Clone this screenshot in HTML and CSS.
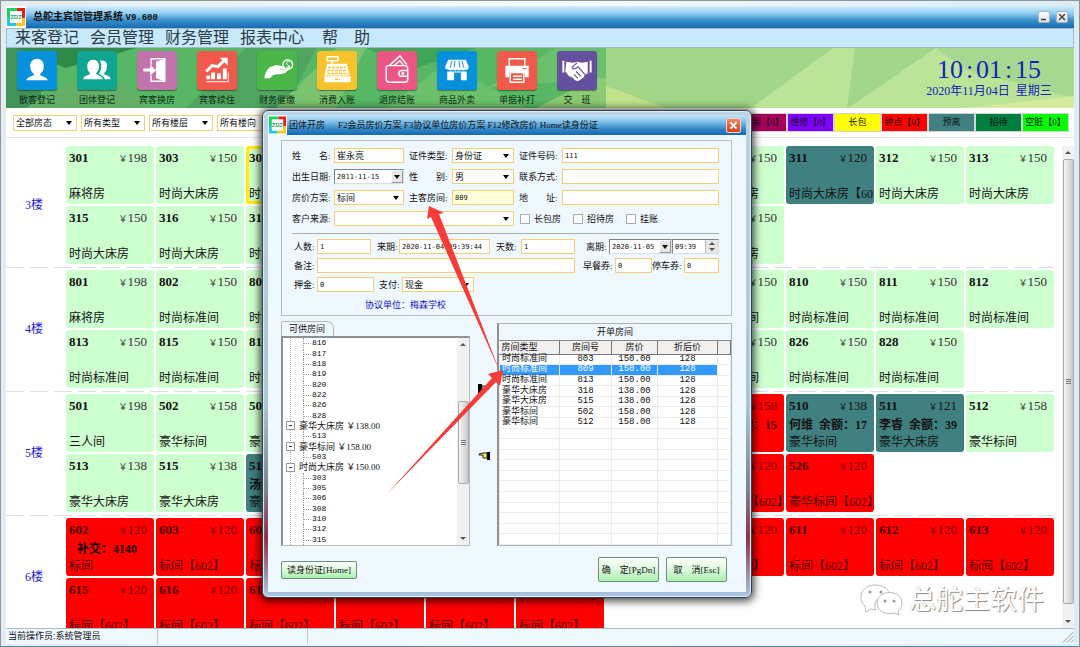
FILE: index.html
```html
<!DOCTYPE html>
<html lang="zh-CN">
<head>
<meta charset="utf-8">
<title>总舵主宾馆管理系统</title>
<link rel="stylesheet" href="styles.css">
</head>
<body>
<div class="window">
  <header class="titlebar">
    <svg class="logo" viewBox="0 0 20 20"><path fill="#18d45c" d="M1 1h10v4H5v6H1z"/><path fill="#f01818" d="M11 1h8v10h-4V5h-4z"/><path fill="#ffc61a" d="M19 11v8h-9v-4h5v-4z"/><path fill="#22c8f4" d="M1 11h4v4h5v4H1z"/><path fill="#fff" d="M4 4h12v12H4z"/><text x="10" y="12" class="logo-text">ZDZ</text></svg>
    <h1 class="app-name">总舵主宾馆管理系统 <span class="version">V9.600</span></h1>
    <div class="win-buttons">
      <button class="win-btn" aria-label="最小化"><svg viewBox="0 0 10 10"><path d="M2 7.500h5" stroke="#444" stroke-width="1.500"/></svg></button>
      <button class="win-btn" aria-label="关闭"><svg viewBox="0 0 10 10"><path d="M2 2l6 6M8 2l-6 6" stroke="#444" stroke-width="1.500"/></svg></button>
    </div>
  </header>
  <nav class="menubar">
    <a href="#">来客登记</a><a href="#">会员管理</a><a href="#">财务管理</a><a href="#">报表中心</a><a href="#" class="help">帮&emsp;助</a>
  </nav>
  <section class="toolbar">
    <svg class="toolbar-bg" viewBox="0 0 1068 60" preserveAspectRatio="none">
      <path fill="#a2d688" d="M0 0h1068v60H0z"/>
      <path fill="#bce498" d="M745 60L827 0h22l-8 60zM842 60L930 0h138v60z"/><path fill="#a7d890" d="M930 0h138v50L960 22z"/><path fill="#d5eb9c" d="M960 60l108-12v12z"/>
      <path fill="#57b765" d="M0 0h600v60H0z"/>
      <path fill="#42925a" d="M0 0h35v60H0z"/><path fill="#2f8a4a" d="M10 0h120L60 20z"/><path fill="#64ae67" d="M35 50l60-30 50 40H20z"/><path fill="#4fa45f" d="M180 60l60-60h70l-30 60z"/><path fill="#7bc36f" d="M270 60L330 0h30l-30 60z"/><path fill="#3fa557" d="M360 0h110l-60 20z"/><path fill="#6ac06b" d="M380 60l60-45 80 45zM480 40l70-40h50v30z"/><path fill="#8acb73" d="M530 60l60-30h10v30z"/><path fill="#c0e38c" d="M600 38l60 22h-60z"/>
    </svg>
    <button class="tool"><svg class="tile blue" viewBox="0 0 40 40"><path fill="#fff" d="M20 8c5 0 7 4 7 8 0 4-2 6-4 8 1 2 7 2 8 6H9c1-4 7-4 8-6-2-2-4-4-4-8 0-4 2-8 7-8z"/></svg>散客登记</button>
    <button class="tool"><svg class="tile teal" viewBox="0 0 40 40"><path fill="#fff" d="M16 9c5 0 6 4 6 7s-1 5-3 7c1 2 6 2 7 6H6c0-4 6-4 7-6-2-2-3-4-3-7s1-7 6-7z"/><path fill="#fff" d="M23 10c6-1 8 3 7 7 0 3-1 4-3 6 1 2 7 2 7 6h-6c-1-4-4-4-6-6 3-4 3-9 1-13z"/></svg>团体登记</button>
    <button class="tool"><svg class="tile purple" viewBox="0 0 40 40"><path fill="none" stroke="#fff" stroke-width="1.500" d="M14 14V8h14v23H14v-6"/><path fill="#fff" d="M19 11l9-3v23l-9-3zM6 18h7v-4l6 6-6 5v-4H6z"/></svg>宾客换房</button>
    <button class="tool"><svg class="tile coral" viewBox="0 0 40 40"><path fill="#fff" d="M9 25h4v4H9zM14 22h4v7h-4zM20 23h4v6h-4zM26 18h4v11h-4zM9 31h22v-9h1v10H9z"/><path fill="none" stroke="#fff" stroke-width="3" d="M9 21l6-6 6 1 7-7"/><path fill="#fff" d="M23 7h8v8z"/></svg>宾客续住</button>
    <button class="tool"><svg class="tile green" viewBox="0 0 40 40"><path fill="#fff" d="M7 28c1-7 3-11 10-13 4-1 9 1 11 2 1 2-2 2-7 2 4 1 9 0 12-4 2 1-1 4-4 7-5 4-12-1-16 6z"/><circle cx="31" cy="14" r="5" fill="none" stroke="#fff" stroke-width="1.500"/><path stroke="#fff" fill="none" d="M33 11c-4-1-4 2-2 3s1 4-2 2"/></svg>财务催缴</button>
    <button class="tool"><svg class="tile yellow" viewBox="0 0 40 40"><path fill="none" stroke="#fff" stroke-width="1.500" d="M10 6h11v4H10zM15 10v4"/><path fill="#fff" d="M10 13h20l3 12H7zM7 26h27v6H7z"/><path fill="none" stroke="#f7c22c" stroke-width="1.500" stroke-dasharray="3 1" d="M11 17h18M10 20h20M10 23h21M18 29h5"/></svg>消费入账</button>
    <button class="tool"><svg class="tile pink" viewBox="0 0 40 40"><path fill="none" stroke="#fff" stroke-width="1.500" d="M11 15h17q3 0 3 3v11q0 3-3 3H12q-3 0-3-3V17q0-2 2-2M31 20h-6q-3 0-3 3t3 3h6M12 15l11-10 7 9M17 15l6-5 4 5"/><circle cx="26" cy="23" r="1.500" fill="#fff"/></svg>退房结账</button>
    <button class="tool"><svg class="tile blue" viewBox="0 0 40 40"><path fill="#fff" d="M11 9h18l3 7q0 4-3 3-3 2-5 0-2 2-4 0-2 2-4 0-2 2-5 0-4 0-3-3zM10 21h20v9h-6v-8h-7v8h-7z"/><path stroke="#0791dd" fill="none" d="M15 10l-2 7M18 10l-1 7M22 10l1 7M25 10l2 7"/></svg>商品外卖</button>
    <button class="tool"><svg class="tile coral" viewBox="0 0 40 40"><path fill="none" stroke="#fff" stroke-width="1.500" d="M12 15V8h16v7"/><path fill="#fff" d="M8 15h24v12h-4v-5H12v5H8z"/><path fill="none" stroke="#fff" stroke-width="1.500" d="M13 22h14v10H13zM16 26h9M16 29h9"/><path stroke="#f1594b" d="M26 18h4"/></svg>单据补打</button>
    <button class="tool"><svg class="tile violet" viewBox="0 0 40 40"><path fill="#fff" d="M5 10h2v12H5zM33 10h2v12h-2zM9 11l7 1 4-1 5 1 6-1v12l-3 1-1 3-3 2-3 2-3-1-3-3-3-1-4-5z"/><path fill="none" stroke="#65509f" stroke-width="1.200" d="M20 12l-5 5q2 3 6-1l7 8M19 21l5 5M17 24l4 4"/></svg>交&emsp;班</button>
    <div class="clock">
      <div class="time">10<span class="colon">:</span>01<span class="colon">:</span>15</div>
      <div class="date">2020年11月04日&nbsp; 星期三</div>
    </div>
  </section>
  <section class="filters">
    <select class="field select" aria-label="房态"><option>全部房态</option></select>
    <select class="field select" aria-label="类型"><option>所有类型</option></select>
    <select class="field select" aria-label="楼层"><option>所有楼层</option></select>
    <select class="field select" aria-label="楼向"><option>所有楼向</option></select>
    <div class="legend">
      <span class="tag reserved">预留【0】</span><span class="tag repair">维修【0】</span><span class="tag long">长包</span><span class="tag hourly">钟点【0】</span><span class="tag leaving">预离</span><span class="tag guest">招待</span><span class="tag dirty">空脏【0】</span>
    </div>
  </section>
  <main class="board">
    <div class="floors" id="floors"></div>
    <div class="scrollbar tall"><i class="up"></i><b class="thumb"></b><i class="down"></i></div>
  </main>
  <footer class="statusbar"><span class="operator">当前操作员:系统管理员</span><span class="cell"></span><svg class="grip" viewBox="0 0 12 12"><path d="M1 12L12 1M5 12l7-7M9 12l3-3" stroke="#999"/></svg></footer>
</div>

<div class="watermark">
  <svg viewBox="0 0 44 34"><path fill="#fff" stroke="#bbb" d="M5 23C-3 16 1 2 15 2c9 0 14 5 15 10-11-1-18 8-14 15l-5-1-5 3z"/><path fill="#fff" stroke="#bbb" d="M17 20c0-14 25-14 25 0 0 4-2 7-4 8l1 4-5-2c-8 2-17-1-17-10z"/><g fill="#999"><circle cx="10" cy="9" r="1.500"/><circle cx="21" cy="9" r="1.500"/><circle cx="25" cy="18" r="1.500"/><circle cx="34" cy="18" r="1.500"/></g></svg>
  <span>总舵主软件</span>
</div>

<div class="dialog" role="dialog" aria-label="团体开房">
  <div class="dialog-inner">
    <header class="dialog-title">
      <svg class="logo small" viewBox="0 0 20 20"><path fill="#18d45c" d="M1 1h10v4H5v6H1z"/><path fill="#f01818" d="M11 1h8v10h-4V5h-4z"/><path fill="#ffc61a" d="M19 11v8h-9v-4h5v-4z"/><path fill="#22c8f4" d="M1 11h4v4h5v4H1z"/><path fill="#fff" d="M4 4h12v12H4z"/><text x="10" y="12" class="logo-text">ZDZ</text></svg>
      <span class="dialog-name">团体开房</span><span>F2会员房价方案 F3协议单位房价方案 F12修改房价 Home读身份证</span>
      <button class="close" aria-label="关闭"><svg viewBox="0 0 15 15"><path d="M4 4l7 7M11 4l-7 7" stroke="#fff" stroke-width="2"/></svg></button>
    </header>
    <form class="dialog-body">
      <fieldset class="group">
        <div class="guest-grid">
          <label for="name">姓&emsp;&emsp;名:</label><input class="field cn" id="name" value="崔永亮">
          <label for="idtype">证件类型:</label><select class="field select" id="idtype"><option>身份证</option></select>
          <label for="idno">证件号码:</label><input class="field" id="idno" value="111">
          <label for="birth">出生日期:</label><div class="sunken"><input id="birth" value="2011-11-15"><button type="button" class="drop" aria-label="选择日期"></button></div>
          <label for="sex">性&emsp;&emsp;别:</label><select class="field select" id="sex"><option>男</option></select>
          <label for="tel">联系方式:</label><input class="field" id="tel">
          <label for="plan">房价方案:</label><select class="field select" id="plan"><option>标间</option></select>
          <label for="mainroom">主客房间:</label><input class="field main-room" id="mainroom" value="809">
          <label for="addr">地&emsp;&emsp;址:</label><input class="field" id="addr">
          <label for="source">客户来源:</label><select class="field select source" id="source"><option></option></select>
          <div class="checks"><label><input type="checkbox">长包房</label><label><input type="checkbox">招待房</label><label><input type="checkbox">挂账</label></div>
        </div>
        <hr>
        <div class="stay-grid">
          <label for="count">人数:</label><input class="field" id="count" value="1">
          <label for="arrive" class="inset">来期:</label><input class="field" id="arrive" value="2020-11-04 09:39:44">
          <label for="days" class="inset">天数:</label><input class="field" id="days" value="1">
          <label for="leave" class="inset wide">离期:</label>
          <div class="leave"><div class="sunken"><input id="leave" value="2020-11-05"><button type="button" class="drop" aria-label="选择日期"></button></div><div class="sunken"><input aria-label="离店时间" value="09:39"><button type="button" class="spin" aria-label="调整时间"><i class="up"></i><i class="down"></i></button></div></div>
          <label for="memo">备注:</label><input class="field memo" id="memo">
          <div class="coupons"><label for="breakfast">早餐券:</label><input class="field" id="breakfast" value="0"><label for="parking">停车券:</label><input class="field" id="parking" value="0"></div>
          <label for="deposit">押金:</label>
          <div class="pay"><input class="field" id="deposit" value="0"><label for="pay">支付:</label><select class="field select" id="pay"><option>现金</option></select></div>
        </div>
        <p class="unit">协议单位：梅森学校</p>
      </fieldset>
      <div class="lists">
        <section class="available">
          <h2 class="tab">可供房间</h2>
          <div class="tree-box">
            <ul class="tree">
              <li>816</li><li>817</li><li>818</li><li>819</li><li>820</li><li>822</li><li>826</li><li>828</li>
              <li class="type">豪华大床房 ￥138.00</li><li>513</li>
              <li class="type">豪华标间 ￥158.00</li><li>503</li>
              <li class="type">时尚大床房 ￥150.00</li><li>303</li><li>305</li><li>306</li><li>308</li><li>310</li><li>312</li><li>315</li>
            </ul>
            <div class="scrollbar short"><i class="up"></i><b class="thumb"></b><i class="down"></i></div>
          </div>
        </section>
        <div class="movers">
          <button type="button" aria-label="添加房间"><svg viewBox="0 0 12 9"><path d="M0 0h4v9H0z"/><path fill="#ffe95c" stroke="#222" d="M4 2h3l4 1v2H8v2H4z"/></svg></button>
          <button type="button" aria-label="移除房间"><svg viewBox="0 0 12 9"><path d="M9 1h3v8H9z"/><path fill="#ffe95c" stroke="#222" d="M9 2H5L1 3v1h4v3h4z"/></svg></button>
        </div>
        <section class="chosen">
          <h2>开单房间</h2>
          <table>
            <colgroup><col class="c1"><col class="c2"><col class="c3"><col class="c4"><col></colgroup>
            <thead><tr><th>房间类型</th><th>房间号</th><th>房价</th><th>折后价</th><th></th></tr></thead>
            <tbody>
              <tr><td>时尚标准间</td><td>803</td><td>150.00</td><td>128</td><td></td></tr>
              <tr class="picked"><td>时尚标准间</td><td>809</td><td>150.00</td><td>128</td><td></td></tr>
              <tr><td>时尚标准间</td><td>813</td><td>150.00</td><td>128</td><td></td></tr>
              <tr><td>豪华大床房</td><td>318</td><td>138.00</td><td>128</td><td></td></tr>
              <tr><td>豪华大床房</td><td>515</td><td>138.00</td><td>128</td><td></td></tr>
              <tr><td>豪华标间</td><td>502</td><td>158.00</td><td>128</td><td></td></tr>
              <tr><td>豪华标间</td><td>512</td><td>158.00</td><td>128</td><td></td></tr>
              <tr><td></td><td></td><td></td><td></td><td></td></tr><tr><td></td><td></td><td></td><td></td><td></td></tr><tr><td></td><td></td><td></td><td></td><td></td></tr><tr><td></td><td></td><td></td><td></td><td></td></tr><tr><td></td><td></td><td></td><td></td><td></td></tr><tr><td></td><td></td><td></td><td></td><td></td></tr><tr><td></td><td></td><td></td><td></td><td></td></tr><tr><td></td><td></td><td></td><td></td><td></td></tr><tr><td></td><td></td><td></td><td></td><td></td></tr><tr><td></td><td></td><td></td><td></td><td></td></tr><tr><td></td><td></td><td></td><td></td><td></td></tr>
            </tbody>
          </table>
        </section>
      </div>
      <div class="actions">
        <button type="button" class="btn read">读身份证[Home]</button>
        <button type="button" class="btn">确&emsp;定[PgDn]</button>
        <button type="button" class="btn">取&emsp;消[Esc]</button>
      </div>
    </form>
  </div>
  <svg class="arrows" viewBox="0 0 490 487"><g fill="#f73c38"><path d="M167 96l-2 13 4-2 69 155-61-158 5-1z"/><path d="M241 260l-15 4 4 4L124 385 234 272l4 4z"/></g></svg>
</div>
<script src="script.js"></script>
</body>
</html>
```
FILE: styles.css
```css
* { box-sizing: border-box; }
body {
  margin: 0;
  font-family: "Liberation Serif", "Noto Sans CJK SC", serif;
  font-size: 9px;
  line-height: 12px;
  color: #111;
  background: #dfe8ee;
}
button, input, select { font: inherit; color: inherit; margin: 0; padding: 0; border: 0; background: none; border-radius: 0; min-width: 0; }
h1, h2, p, ul { margin: 0; padding: 0; font-weight: 400; font-size: 9px; }
a { color: inherit; text-decoration: none; }
.window {
  height: 100vh;
  display: flex;
  flex-direction: column;
  padding: 5px 5px 2px;
  border: 1px solid #8c969d;
  border-bottom: 1px solid #5685ad;
  background: linear-gradient(90deg, #e4ecef, #f6f9fa 50%, #dcecf5);
}
.titlebar {
  flex: none;
  height: 22px;
  display: flex;
  align-items: center;
  background: linear-gradient(#d4effd, #8ccbf0 35%, #3a8fcb 65%, #146bb5);
}
.logo { width: 20px; height: 22px; background: #fff; }
.logo-text { font: bold 6px "Liberation Sans", sans-serif; text-anchor: middle; fill: #1ca06a; }
.app-name { margin-left: 7px; font-size: 10px; font-weight: 700; flex: 1; }
.version { font-family: "Liberation Mono", monospace; font-size: 9px; }
.win-buttons { display: flex; gap: 6px; padding-right: 6px; }
.win-btn { width: 12px; height: 12px; border: 1px solid #a7b4bd; border-radius: 2px; background: linear-gradient(#fff, #d9dfe3); display: flex; }
.menubar {
  flex: none;
  height: 20px;
  display: flex;
  align-items: center;
  gap: 11px;
  padding-left: 8px;
  background: #c8e8fc;
  border: 1px solid #a5b8c4;
  font-size: 16px;
  line-height: 18px;
  color: #2b3a46;
}
.help { margin-left: 7px; }
.toolbar { flex: none; height: 60px; display: flex; position: relative; padding-left: 1px; }
.toolbar-bg { position: absolute; inset: 0; width: 100%; height: 100%; }
.tool { position: relative; flex: none; width: 60px; display: flex; flex-direction: column; align-items: center; gap: 4px; padding-top: 3px; color: #0b2a10; }
.tile { width: 40px; height: 39px; border-radius: 3px; box-shadow: 0 1px 1px rgba(0, 0, 0, .4); }
.blue { background: #0791dd; }
.teal { background: #10a590; }
.purple { background: #c273ae; }
.coral { background: #f1594b; }
.green { background: #4bb648; }
.yellow { background: #f7c22c; }
.pink { background: #eb5684; }
.violet { background: #65509f; }
.clock { position: relative; margin-left: auto; width: 170px; display: flex; flex-direction: column; align-items: center; padding-top: 9px; color: #1423b8; }
.time { font-size: 26px; line-height: 26px; }
.colon { display: inline-block; width: 13px; text-align: center; }
.date { font-size: 12px; line-height: 17px; }
.filters { flex: none; height: 30px; display: flex; align-items: center; gap: 4px; padding: 0 5px 0 7px; background: #fff; border-bottom: 1px solid #dce8f2; }
.filters .field { width: 64px; height: 16px; }
.field { height: 15px; border: 1px solid #f2cf78; background-color: #fff; padding: 0 2px; font-family: "DejaVu Sans Mono", "Noto Sans CJK SC", monospace; font-size: 7px; line-height: 12px; width: 100%; }
.select {
  appearance: none;
  font-size: 9px;
  background-image: url("data:image/svg+xml,%3Csvg xmlns='http://www.w3.org/2000/svg' viewBox='0 0 6 4'%3E%3Cpath d='M0 0h6L3 4z'/%3E%3C/svg%3E");
  background-repeat: no-repeat;
  background-position: right 4px center;
  background-size: 6px 4px;
}
.cn { font-size: 9px; }
.legend { margin-left: auto; display: flex; }
.tag { width: 47px; height: 19px; border: 1px solid #d4d4d4; line-height: 17px; text-align: center; white-space: nowrap; overflow: hidden; }
.reserved { background: #a8005c; }
.repair { background: #8000ff; }
.long { background: #ffff00; }
.hourly { background: #ff0000; }
.leaving { background: #408080; }
.guest { background: #008040; }
.dirty { background: #00ff00; }
.board { flex: 1; min-height: 0; display: flex; background: #fff; padding-top: 8px; }
.floors { flex: 1; min-width: 0; overflow: hidden; padding-right: 8px; }
.floor {
  display: grid;
  grid-template-columns: 60px 1fr;
  align-items: center;
  padding-bottom: 6px;
  background: repeating-linear-gradient(90deg, #d5e0e8 0 18px, transparent 18px 24px) left bottom 2px / 100% 1px no-repeat;
}
.floor-name { text-align: center; font-size: 12px; line-height: 16px; color: #1b1bd0; padding-right: 4px; }
.cards { display: grid; grid-template-columns: repeat(11, minmax(0, 1fr)); gap: 2px; }
.row-start { grid-column-start: 1; }
.card { height: 58px; border-radius: 3px; background: #ceffce; overflow: hidden; display: grid; grid-template: 20px 18px 16px / auto 1fr; align-items: center; padding: 2px 7px 2px 3px; font-size: 12px; line-height: 16px; white-space: nowrap; }
.card b, .card .price { font-size: 13px; }
.card .price { text-align: right; color: #333; }
.card .yen { font-size: 9px; }
.card .note { grid-column: 1 / 3; font-weight: 700; }
.card .kind { grid-column: 1 / 3; grid-row: 3; }
.card.red { background: #ff0000; color: #4a0000; }
.card.red .price { color: #700; }
.card.dark { background: #408080; }
.card.dark .price { color: #111; }
.card.current { box-shadow: inset 0 0 0 3px #ffee00; }
.note.indent { padding-left: 8px; color: #1c0000; }
.scrollbar { flex: none; width: 12px; background: #f1f1f1; display: flex; flex-direction: column; align-items: center; }
.up, .down { border: 3px solid transparent; width: 0; height: 0; }
.up { border-bottom-color: #555; border-top: 0; }
.down { border-top-color: #555; border-bottom: 0; }
.scrollbar .up, .scrollbar .down { margin: 5px 0; }
.thumb { width: 11px; border: 1px solid #aaa; border-radius: 2px; background: repeating-linear-gradient(#777 0 1px, transparent 1px 2px) center / 5px 5px no-repeat, linear-gradient(90deg, #f5f5f5, #c9c9c9); }
.tall .thumb { flex: 1; margin-bottom: 11px; }
.short .thumb { margin: 50px 0 auto; height: 83px; }
.statusbar { flex: none; height: 16px; display: flex; border-top: 1px solid #a9bac8; background: #eff8fe; font-family: "Liberation Sans", "Noto Sans CJK SC", sans-serif; line-height: 15px; }
.operator { width: 152px; padding-left: 2px; border-right: 1px solid #bccad4; }
.cell { width: 150px; border-right: 1px solid #bccad4; }
.grip { width: 12px; margin-left: auto; }
.watermark { position: absolute; right: 36px; top: 582px; display: flex; align-items: center; gap: 5px; font-size: 27px; line-height: 36px; color: #fff; text-shadow: 1px 1px 1px #888, 0 0 1px #ccc; }
.watermark svg { width: 44px; height: 34px; }

.dialog {
  position: absolute;
  left: 262px;
  top: 110px;
  width: 490px;
  padding: 4px 5px 5px;
  border-radius: 6px;
  border: 1px solid #34424c;
  background: linear-gradient(#bdd3e4, #a9c6d6 60%, #7c7f8e 78%, #8f2f45 88%, #a9c8e6);
  box-shadow: 0 1px 8px 2px rgba(0, 0, 0, .75), inset 0 0 1px 1px #dff0fa;
}
.dialog-inner { background: #f0f8ff; }
.dialog-title { height: 20px; display: flex; align-items: center; background: linear-gradient(#c4e6fa, #7dbfe9 35%, #3487c4 70%, #1468b0); white-space: nowrap; padding-right: 5px; }
.logo.small { width: 19px; height: 20px; margin-right: 2px; }
.dialog-name { width: 49px; }
.close { margin-left: auto; width: 15px; height: 15px; background: linear-gradient(#f08a6c, #d5401f); border: 1px solid #fbd0c0; border-radius: 2px; display: flex; }
.dialog-body { padding: 5px 14px 10px 13px; }
.group { margin: 0; min-width: 0; border: 1px solid #b4bec4; padding: 7px 12px 3px 10px; height: 176px; }
.group label { white-space: nowrap; }
.guest-grid { display: grid; grid-template-columns: 42px 70px 48px 62px 48px 1fr; row-gap: 6px; align-items: center; }
.guest-grid > label:not(:nth-of-type(3n + 1)) { padding-left: 5px; }
.main-room { background-color: #ffffd8; }
.source { grid-column: 2 / 5; }
.checks { grid-column: 5 / 7; display: flex; gap: 12px; padding-left: 6px; }
.checks label { display: flex; align-items: center; gap: 4px; }
.checks input { appearance: none; width: 10px; height: 10px; border: 1px solid #a5adb3; background: #fff; }
.sunken { display: flex; height: 15px; background: #fff; border: 1px solid #7e8488; border-right-color: #ddd; border-bottom-color: #ddd; font-family: "DejaVu Sans Mono", monospace; font-size: 7px; }
.sunken input { flex: 1; width: 0; padding-left: 2px; }
.drop { width: 12px; background: #e6e6e6; border: 1px solid #999; border-left-color: #fff; border-top-color: #fff; display: flex; align-items: center; justify-content: center; }
.drop::before { content: ""; border: 3px solid transparent; border-top: 4px solid #111; border-bottom: 0; }
.spin { width: 13px; background: #e6e6e6; display: flex; flex-direction: column; justify-content: space-around; align-items: center; border-left: 1px solid #bbb; }
.group hr { margin: 7px 0 5px; border: 0; border-top: 1px solid #a9b0b5; }
.stay-grid { display: grid; grid-template-columns: 23px 54px 28px 91px 31px 54px 34px 1fr; row-gap: 4px; align-items: center; padding-left: 2px; }
.inset { padding-left: 6px; }
.inset.wide { padding-left: 11px; }
.leave { display: grid; grid-template-columns: 63px 1fr; }
.memo { grid-column: 2 / 7; }
.coupons { grid-column: 7 / 9; display: grid; grid-template-columns: 32px 37px 32px 1fr; align-items: center; padding-left: 8px; }
.pay { grid-column: 2 / 9; display: grid; grid-template-columns: 57px 28px 72px; align-items: center; }
.pay label { padding-left: 5px; }
.unit { margin: 7px 0 0 73px; color: #1010d0; }
.lists { display: flex; align-items: stretch; height: 230px; padding-top: 5px; }
.available { width: 189px; display: flex; flex-direction: column; }
.tab { width: 53px; height: 15px; border: 1px solid #b0b8bc; border-bottom: 0; border-radius: 2px 7px 0 0; padding-left: 7px; line-height: 15px; }
.tree-box { flex: 1; min-height: 0; display: flex; background: #fff; border: 2px solid #8c9296; border-right: 1px solid #bbb; border-bottom: 1px solid #bbb; }
.tree { flex: 1; list-style: none; display: flex; flex-direction: column; overflow: hidden; background: repeating-linear-gradient(#aaa 0 1px, transparent 1px 2px) 7px 0 / 1px 100% no-repeat; }
.tree li { flex: 1; min-height: 0; line-height: 10px; display: flex; align-items: center; padding-left: 20px; font-family: "Liberation Mono", monospace; font-size: 8px; }
.tree li::before { content: ""; width: 7px; height: 10px; margin-right: 1px; border-left: 1px dotted #999; background: repeating-linear-gradient(90deg, #aaa 0 1px, transparent 1px 2px) 0 5px / 100% 1px no-repeat; }
.tree .type { padding-left: 3px; font-family: "Liberation Serif", "Noto Sans CJK SC", serif; font-size: 9px; }
.tree .type::before { width: 7px; height: 7px; margin-right: 4px; border: 1px solid #999; background: linear-gradient(#333, #333) center / 3px 1px no-repeat #fff; }
.movers { width: 27px; display: flex; flex-direction: column; align-items: center; gap: 58px; padding-top: 63px; }
.movers button { display: flex; }
.movers svg { width: 12px; height: 9px; }
.chosen { flex: 1; min-width: 0; border: 1px solid #a9b3ba; border-left: 2px solid #8c9296; background: #fff; display: flex; flex-direction: column; margin-top: 2px; }
.chosen h2 { text-align: center; background: #f0f8ff; line-height: 16px; border-bottom: 1px solid #888; }
.chosen table { width: 100%; border-collapse: collapse; table-layout: fixed; height: 204px; }
.c1 { width: 60px; }
.c2 { width: 52px; }
.c3 { width: 46px; }
.c4 { width: 60px; }
.chosen th { font-weight: 400; background: #f0f0f0; border-right: 1px solid #777; border-bottom: 1px solid #777; line-height: 12px; }
.chosen td { height: 10px; text-align: center; border: 1px solid #ececec; border-top: 0; line-height: 9px; font-family: "Liberation Mono", "Noto Sans CJK SC", monospace; white-space: nowrap; }
.chosen thead tr { height: 13px; }
.chosen tbody tr { height: 10px; }
.chosen th, .chosen td { padding: 0; }
.chosen td:first-child, .chosen th:first-child { text-align: left; padding-left: 2px; }
.picked td:not(:last-child) { background: #3399ff; color: #fff; }
.actions { display: flex; align-items: flex-end; gap: 7px; padding: 11px 5px 0 0; }
.btn { width: 61px; height: 25px; border: 1px solid #6f8d80; border-radius: 2px; background: linear-gradient(#fbfffb, #dcf8dc 50%, #a9f0ae); white-space: nowrap; }
.read { width: 76px; height: 18px; margin-right: auto; align-self: center; }
.arrows { position: absolute; left: -1px; top: -1px; width: 490px; height: 487px; pointer-events: none; }
```
FILE: script.js
```js
// Each room: number|price|kind|state|note
const floors = [
  ["3楼", [
    ["301|198|麻将房", "303|150|时尚大床房", "305|150|时尚大床房|current", "306|150|时尚大床房", "307|150|时尚大床房", "308|150|时尚大床房", "309|150|时尚大床房", "310|150|时尚大床房", "311|120|时尚大床房【602】|dark", "312|150|时尚大床房", "313|150|时尚大床房"],
    ["315|150|时尚大床房", "316|150|时尚大床房", "317|150|时尚大床房", "318|138|豪华大床房", "319|150|时尚大床房", "320|150|时尚大床房", "321|150|时尚大床房", "322|150|时尚大床房"]]],
  ["4楼", [
    ["801|198|麻将房", "802|150|时尚标准间", "803|150|时尚标准间", "805|150|时尚标准间", "806|150|时尚标准间", "807|150|时尚标准间", "808|150|时尚标准间", "809|150|时尚标准间", "810|150|时尚标准间", "811|150|时尚标准间", "812|150|时尚标准间"],
    ["813|150|时尚标准间", "815|150|时尚标准间", "816|150|时尚标准间", "817|150|时尚标准间", "818|150|时尚标准间", "819|150|时尚标准间", "820|150|时尚标准间", "822|150|时尚标准间", "826|150|时尚标准间", "828|150|时尚标准间"]]],
  ["5楼", [
    ["501|198|三人间", "502|158|豪华标间", "503|158|豪华标间", "505|158|豪华标间", "506|158|豪华标间", "507|158|豪华标间", "508|158|豪华标间", "509|158|标间|red|王维\u00a0 余额：15", "510|138|豪华标间|dark|何维\u00a0 余额：17", "511|121|豪华大床房|dark|李睿\u00a0 余额：39", "512|158|豪华标间"],
    ["513|138|豪华大床房", "515|138|豪华大床房", "516|138|豪华大床房|dark|汤维", "517|138|豪华大床房", "518|138|豪华大床房", "519|138|豪华大床房", "520|138|豪华大床房", "522|120|豪华标间【602】|red", "526|120|豪华标间【602】|red"]]],
  ["6楼", [
    ["602|120|标间|red|补交：4140", "603|120|标间【602】|red", "605|120|标间【602】|red", "606|120|标间【602】|red", "607|120|标间【602】|red", "608|120|标间【602】|red", "609|120|标间【602】|red", "610|120|标间【602】|red", "611|120|标间【602】|red", "612|120|标间【602】|red", "613|120|标间【602】|red"],
    ["615|120|标间【602】|red", "616|120|标间【602】|red", "617|120|标间【602】|red", "618|120|标间【602】|red", "619|120|标间【602】|red", "620|120|标间【602】|red"]]]
];

function card(room, index) {
  const [no, price, kind, state = "", note = ""] = room.split("|");
  const start = index === 0 ? " row-start" : "";
  const indent = note.startsWith("补交") ? " indent" : "";
  const noteHtml = note ? `<span class="note${indent}">${note}</span>` : "";
  return `<article class="card ${state}${start}"><b>${no}</b><span class="price"><span class="yen">￥</span>${price}</span>${noteHtml}<span class="kind">${kind}</span></article>`;
}

document.getElementById("floors").innerHTML = floors.map(([name, rows]) =>
  `<section class="floor"><div class="floor-name">${name}</div><div class="cards">${rows.map(r => r.map(card).join("")).join("")}</div></section>`
).join("");
```
